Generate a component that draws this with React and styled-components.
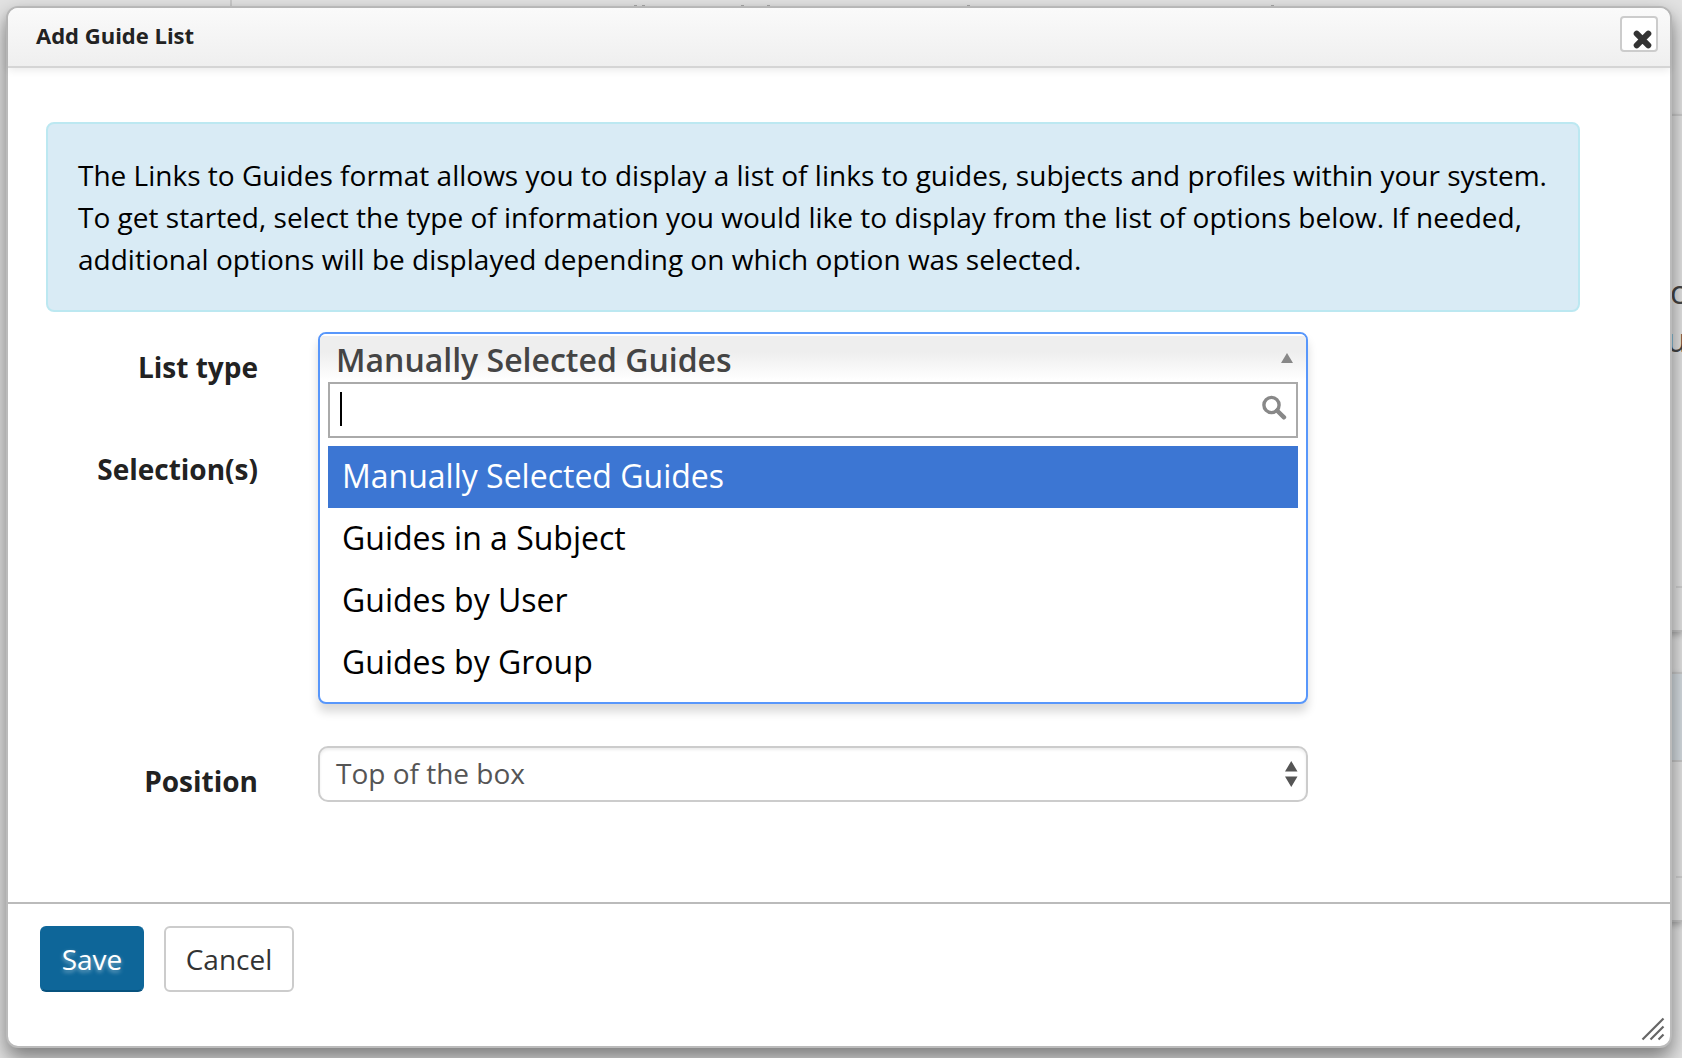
import React from "react";
import styled, { createGlobalStyle } from "styled-components";

const GlobalStyle = createGlobalStyle`
  *, *::before, *::after { box-sizing: border-box; }
  body {
    margin: 0;
    background: #e2e2e2;
    font-family: "Open Sans", "Noto Sans", sans-serif;
    color: #222;
    overflow: hidden;
  }
`;

const Screen = styled.div`
  position: relative;
  height: 1058px;
  overflow: hidden;
`;

/* Page behind the dialog */
const Backdrop = styled.div`
  display: grid;
  grid-template-columns: 230px 1fr;
  height: 1000px;
`;

const Sidebar = styled.div`
  height: 100%;
`;

const PageColumn = styled.div`
  display: flex;
  flex-direction: column;
  border-left: 2px solid #c9c9c9;
`;

const ClippedTitle = styled.svg`
  display: block;
  height: 6px;
  width: 700px;
  margin-left: 368px;
`;

const Panel = styled.div`
  height: ${(p) => p.$height}px;
  margin-top: ${(p) => p.$gap}px;
  border-top: 2px solid #cacaca;
  border-bottom: 2px solid #c4c4c4;
  box-shadow: 0 3px 6px rgba(0, 0, 0, 0.25);
  display: flex;
  flex-direction: column;
  align-items: stretch;
`;

const PanelHeader = styled.div`
  height: 88px;
  background: #d4dbe0;
  border-bottom: 2px solid #c8c8c8;
`;

const PanelText = styled.div`
  flex: 1;
  display: flex;
  flex-direction: column;
  align-items: flex-end;
  padding-top: 152px;
  font-size: 32px;
  line-height: 48px;
  color: #444;
`;

const TextLine = styled.span`
  width: ${(p) => p.$width}px;
`;

const PanelBody = styled.div`
  flex: 1;
`;

const PanelFooter = styled.div`
  height: 44px;
  border-top: 2px dashed #cfcfcf;
`;

/* Dialog */
const Dialog = styled.section`
  position: absolute;
  inset: 6px 10px 10px 6px;
  display: flex;
  flex-direction: column;
  background: #fff;
  border: 2px solid #bbb;
  border-radius: 12px;
  box-shadow: 0 10px 20px rgba(0, 0, 0, 0.46);
`;

const TitleBar = styled.header`
  display: flex;
  justify-content: space-between;
  align-items: flex-start;
  height: 60px;
  padding: 8px 12px 0 28px;
  border-bottom: 2px solid #d5d5d5;
  border-radius: 10px 10px 0 0;
  background: linear-gradient(#fafafa, #efefef);
  box-shadow: 0 2px 8px rgba(0, 0, 0, 0.09);
`;

const Title = styled.h1`
  margin: 4px 0 0;
  font-size: 22px;
  line-height: 30px;
  font-weight: 700;
`;

const CloseButton = styled.button`
  display: flex;
  align-items: flex-end;
  justify-content: flex-end;
  width: 38px;
  height: 36px;
  padding: 0 4.5px 1.5px 0;
  background: #fff;
  border: 2px solid #ccc;
  border-radius: 4px;
`;

const Content = styled.div`
  display: flex;
  flex-direction: column;
  flex: 1;
  padding: 54px 90px 0 38px;
`;

const Notice = styled.p`
  width: 1534px;
  height: 190px;
  margin: 0 0 20px;
  padding: 30px;
  border: 2px solid #bce8f1;
  border-radius: 8px;
  background: #d9ebf5;
  color: #000;
  font-size: 28px;
  line-height: 42px;
  letter-spacing: 0.008px;
  white-space: nowrap;
`;

const Form = styled.div`
  display: grid;
  grid-template-columns: 212px 990px;
  grid-template-rows: 102px 312px 56px;
  column-gap: 60px;
`;

const Label = styled.label`
  font-size: 28px;
  line-height: 40px;
  font-weight: 700;
  text-align: right;
  padding-top: 15px;
`;

const Dropdown = styled.div`
  grid-row: span 2;
  height: 372px;
  border: 2px solid #5897fb;
  border-radius: 8px;
  background: #fff;
  box-shadow: 0 8px 10px rgba(0, 0, 0, 0.15);
  padding: 0 8px;
`;

const Selected = styled.div`
  display: flex;
  justify-content: space-between;
  align-items: flex-start;
  height: 48px;
  margin: 0 -8px;
  padding: 0 13px 0 16px;
  border-radius: 6px 6px 0 0;
  background: linear-gradient(#fff 0 2px, #eee 2px, #eee 38%, #fff 96%);
  color: #444;
  font-size: 32px;
  line-height: 52px;
  font-weight: 600;
`;

const ArrowUp = styled.svg`
  width: 12px;
  height: 10px;
  margin-top: 19px;
`;

const SearchBox = styled.div`
  display: flex;
  align-items: flex-start;
  justify-content: space-between;
  height: 56px;
  padding: 8px 9px 8px 10px;
  border: 2px solid #aaa;
  background: #fff;
`;

const Caret = styled.span`
  width: 2px;
  height: 34px;
  background: #000;
`;

const SearchIcon = styled.svg`
  width: 26px;
  height: 26px;
  margin-top: 2px;
`;

const OptionList = styled.ul`
  list-style: none;
  margin: 8px 0 0;
  padding: 0;
`;

const Option = styled.li`
  height: 62px;
  padding-left: 14px;
  font-size: 32px;
  line-height: 59px;
  color: ${(p) => (p.$active ? "#fff" : "#000")};
  background: ${(p) => (p.$active ? "#3c76d3" : "transparent")};
`;

const SelectBox = styled.div`
  display: flex;
  justify-content: space-between;
  align-items: flex-start;
  height: 56px;
  padding: 0 8.5px 0 16px;
  border: 2px solid #ccc;
  border-radius: 10px;
  box-shadow: inset 0 2px 3px rgba(0, 0, 0, 0.075);
  color: #555;
  font-size: 28px;
  line-height: 50px;
`;

const Stepper = styled.svg`
  width: 12.5px;
  height: 26px;
  margin-top: 13px;
`;

const Footer = styled.footer`
  display: flex;
  gap: 20px;
  height: 144px;
  padding: 22px 32px;
  border-top: 2px solid #bbb;
`;

const Button = styled.button`
  width: ${(p) => p.$width}px;
  height: 66px;
  padding: 0 0 1px;
  border: 2px solid ${(p) => (p.$primary ? "#0e6699" : "#ccc")};
  border-bottom-color: ${(p) => (p.$primary ? "#07527e" : "#ccc")};
  border-radius: 6px;
  background: ${(p) => (p.$primary ? "#0e6699" : "#fff")};
  color: ${(p) => (p.$primary ? "#fff" : "#333")};
  text-shadow: ${(p) => (p.$primary ? "0 2px 4px rgba(255,255,255,.5)" : "none")};
  font: 400 28px/40px "Open Sans", "Noto Sans", sans-serif;
`;

const ResizeGrip = styled.svg`
  position: absolute;
  right: 5px;
  bottom: 5px;
  width: 24px;
  height: 24px;
`;

const options = [
  "Manually Selected Guides",
  "Guides in a Subject",
  "Guides by User",
  "Guides by Group",
];

export default function App() {
  return (
    <Screen>
      <GlobalStyle />
      <Backdrop aria-hidden="true">
        <Sidebar />
        <PageColumn>
          <ClippedTitle viewBox="0 0 700 6">
            {[402, 410, 509, 535, 735, 1039].map((x) => (
              <rect key={x} x={x - 368} y="5" width="3" height="1" fill="#a8a8a8" />
            ))}
          </ClippedTitle>
          <Panel $height={518} $gap={108}>
            <PanelText>
              <TextLine $width={12}>c</TextLine>
              <TextLine $width={15}>u</TextLine>
            </PanelText>
            <PanelFooter />
          </Panel>
          <Panel $height={250} $gap={40}>
            <PanelHeader />
            <PanelBody />
            <PanelFooter />
          </Panel>
        </PageColumn>
      </Backdrop>

      <Dialog role="dialog" aria-label="Add Guide List">
        <TitleBar>
          <Title>Add Guide List</Title>
          <CloseButton aria-label="Close">
            <svg width="19" height="19" viewBox="0 0 19 19">
              <path d="M3.7 3.7 15.3 15.3M15.3 3.7 3.7 15.3" stroke="#333" strokeWidth="6" strokeLinecap="round" />
            </svg>
          </CloseButton>
        </TitleBar>
        <Content>
          <Notice>
            The Links to Guides format allows you to display a list of links to guides, subjects and profiles within your system.
            <br />
            To get started, select the type of information you would like to display from the list of options below. If needed,
            <br />
            additional options will be displayed depending on which option was selected.
          </Notice>
          <Form>
            <Label>List type</Label>
            <Dropdown>
              <Selected>
                <span>Manually Selected Guides</span>
                <ArrowUp viewBox="0 0 12 10">
                  <path d="M6 0 12 10H0Z" fill="#888" />
                </ArrowUp>
              </Selected>
              <SearchBox>
                <Caret />
                <SearchIcon viewBox="0 0 26 26">
                  <circle cx="10.5" cy="11" r="7.6" fill="none" stroke="#888" strokeWidth="3.4" />
                  <path d="M16 16.5 23 23.3" stroke="#888" strokeWidth="4.4" strokeLinecap="round" />
                </SearchIcon>
              </SearchBox>
              <OptionList>
                {options.map((name, i) => (
                  <Option key={name} $active={i === 0}>
                    {name}
                  </Option>
                ))}
              </OptionList>
            </Dropdown>
            <Label>Selection(s)</Label>
            <Label>Position</Label>
            <SelectBox>
              <span>Top of the box</span>
              <Stepper viewBox="0 0 12.5 26">
                <path d="M6.25 0 12.5 10.5H0ZM0 15.5H12.5L6.25 26Z" fill="#555" />
              </Stepper>
            </SelectBox>
          </Form>
        </Content>
        <Footer>
          <Button $primary $width={104}>Save</Button>
          <Button $width={130}>Cancel</Button>
        </Footer>
        <ResizeGrip viewBox="0 0 24 24">
          <path d="M1.5 22.5 22.5 1.5M9.5 22.5 22.5 9.5M17.5 22.5 22.5 17.5" stroke="#666" strokeWidth="2.2" />
        </ResizeGrip>
      </Dialog>
    </Screen>
  );
}
